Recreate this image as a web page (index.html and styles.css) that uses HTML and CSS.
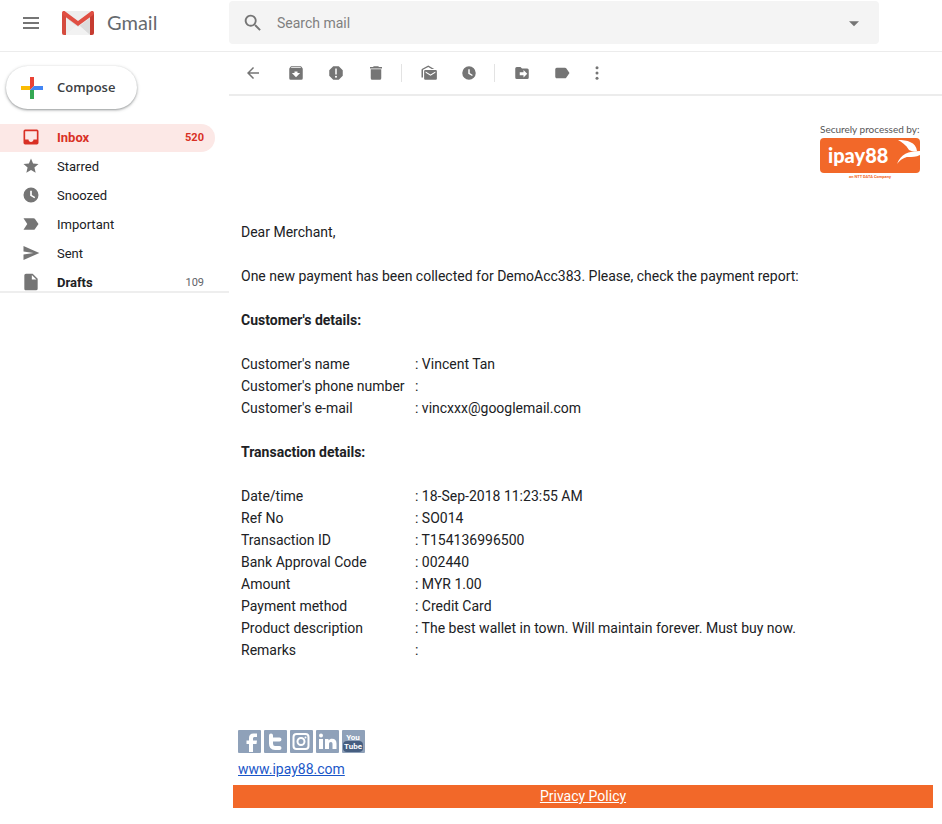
FILE: index.html
```html
<!DOCTYPE html>
<html lang="en">
<head>
<meta charset="utf-8">
<meta name="viewport" content="width=device-width, initial-scale=1">
<title>Gmail</title>
<link rel="stylesheet" href="styles.css">
</head>
<body>
<header class="header">
  <div class="brand">
    <button class="icon-button menu" type="button" aria-label="Main menu">
      <svg class="icon" viewBox="0 0 20 20"><path d="M2 4h16v2H2zM2 9h16v2H2zM2 14h16v2H2z"/></svg>
    </button>
    <svg class="gmail-logo" viewBox="0 0 32 24" aria-hidden="true">
      <rect width="32" height="24" rx="2" fill="#eeeeee"/>
      <path d="M4 24 16 14l12 10z" fill="#f7f7f7"/>
      <path d="M4 7 16 16 28 7v17L16 14z" fill="#dcdcdc"/>
      <path d="M4 24 14 15l2 2 2-2 10 9z" fill="#f2f2f2"/>
      <path d="M0 2v20a2 2 0 0 0 2 2h2V5z" fill="#d54c3f"/>
      <path d="M32 2v20a2 2 0 0 1-2 2h-2V5z" fill="#c63c31"/>
      <path d="M0 2C0 0 2-.3 3.200.5L16 10 28.800.5C30-.3 32 0 32 2c0 1-.5 1.800-1.200 2.300L16 15 1.200 4.300C.5 3.800 0 3 0 2z" fill="#e04f43"/>
    </svg>
    <span class="wordmark">Gmail</span>
  </div>
  <form class="search" role="search">
    <button class="icon-button" type="button" aria-label="Search">
      <svg class="icon search-icon" viewBox="0 0 24 24"><path d="M15.500 14h-.8l-.3-.3A6.500 6.500 0 1 0 13.700 14.400l.3.3v.8l5 5 1.500-1.500zm-6 0a4.500 4.500 0 1 1 0-9 4.500 4.500 0 0 1 0 9z"/></svg>
    </button>
    <input class="search-field" type="text" placeholder="Search mail" aria-label="Search mail">
    <button class="icon-button" type="button" aria-label="Search options">
      <svg class="icon" viewBox="0 0 24 24"><path d="M6 10l6 6 6-6z"/></svg>
    </button>
  </form>
</header>
<div class="layout">
  <aside class="sidebar">
    <button class="compose" type="button">
      <svg class="plus" viewBox="0 0 22 22" aria-hidden="true"><path fill="#ea4335" d="M9 0h4v9l-4 4z"/><path fill="#fbbc04" d="M0 9h9v4H0z"/><path fill="#34a853" d="M9 13h4v9H9z"/><path fill="#4285f4" d="M13 9h9v4H9z"/></svg>
      <span class="compose-label">Compose</span>
    </button>
    <nav class="folders" aria-label="Folders">
      <a class="folder active" href="#inbox">
        <svg class="icon" viewBox="0 0 24 24"><path d="M19 3H5a2 2 0 0 0-2 2v14a2 2 0 0 0 2 2h14a2 2 0 0 0 2-2V5a2 2 0 0 0-2-2zm0 12h-4c0 1.700-1.300 3-3 3s-3-1.300-3-3H5V5h14z"/></svg>
        <span class="name">Inbox</span><span class="count">520</span>
      </a>
      <a class="folder" href="#starred">
        <svg class="icon" viewBox="0 0 24 24"><path d="M12 16.800 17.600 20.200l-1.500-6.400L21 9.500l-6.500-.6L12 3 9.500 8.900 3 9.500l4.900 4.300-1.500 6.400z"/></svg>
        <span class="name">Starred</span>
      </a>
      <a class="folder" href="#snoozed">
        <svg class="icon" viewBox="0 0 24 24"><path fill-rule="evenodd" d="M12 3a9 9 0 1 0 0 18 9 9 0 0 0 0-18zM11 7h2v5l4 2.500-.9 1.500L11 13z"/></svg>
        <span class="name">Snoozed</span>
      </a>
      <a class="folder" href="#important">
        <svg class="icon" viewBox="0 0 24 24"><path d="M3 19h12c.7 0 1.300-.3 1.600-.8L21 12l-4.400-6.200C16.300 5.300 15.700 5 15 5H3l4.500 7z"/></svg>
        <span class="name">Important</span>
      </a>
      <a class="folder" href="#sent">
        <svg class="icon" viewBox="0 0 24 24"><path d="M3 20.500 22 12 3 3.500v6.600L15 12 3 13.900z"/></svg>
        <span class="name">Sent</span>
      </a>
      <a class="folder unread" href="#drafts">
        <svg class="icon" viewBox="0 0 24 24"><path d="M6 2a2 2 0 0 0-2 2v16c0 1.100.9 2 2 2h12a2 2 0 0 0 2-2V8l-6-6zm7 7V3.500L18.500 9z"/></svg>
        <span class="name">Drafts</span><span class="count">109</span>
      </a>
    </nav>
  </aside>
  <main class="main">
    <div class="toolbar" role="toolbar" aria-label="Message actions">
      <button class="tool back" type="button" aria-label="Back"><svg class="icon" viewBox="0 0 24 24"><path d="M20 11H7.800l5.600-5.600L12 4l-8 8 8 8 1.400-1.400L7.800 13H20z"/></svg></button>
      <button class="tool" type="button" aria-label="Archive"><svg class="icon" viewBox="0 0 24 24"><path fill-rule="evenodd" d="M20.500 5.200 19.200 3.500C18.900 3.200 18.500 3 18 3H6c-.5 0-.9.200-1.200.5L3.500 5.200C3.200 5.600 3 6 3 6.500V19a2 2 0 0 0 2 2h14a2 2 0 0 0 2-2V6.500c0-.5-.2-.9-.5-1.300zM12 17.500 6.500 12H10v-2h4v2h3.500zM5.100 5l.8-1h12l.9 1z"/></svg></button>
      <button class="tool" type="button" aria-label="Report spam"><svg class="icon" viewBox="0 0 24 24"><path fill-rule="evenodd" d="M15.700 3H8.300L3 8.300v7.400L8.300 21h7.400l5.300-5.300V8.300zM11 6h2v8h-2zM12 15.600a1.400 1.400 0 1 1 0 2.800 1.400 1.400 0 0 1 0-2.800z"/></svg></button>
      <button class="tool" type="button" aria-label="Delete"><svg class="icon" viewBox="0 0 24 24"><path d="M5 19a2 2 0 0 0 2 2h10a2 2 0 0 0 2-2V7H5zM20 4h-4l-1-1H9L8 4H4v2h16z"/></svg></button>
      <span class="divider"></span>
      <button class="tool" type="button" aria-label="Mark as unread"><svg class="icon" viewBox="0 0 24 24"><path fill-rule="evenodd" d="M7 8h14a1.500 1.500 0 0 1 1.500 1.500v10A1.500 1.500 0 0 1 21 21H7a1.500 1.500 0 0 1-1.500-1.500v-10A1.500 1.500 0 0 1 7 8zm.5 2v1.800l6.500 4 6.500-4V10L14 14z"/><path d="M2 18V8c0-.8.3-1.300 1-1.700L11 2l8 4.500h-3.500L11 4 4 7.700V18z"/></svg></button>
      <button class="tool" type="button" aria-label="Snooze"><svg class="icon" viewBox="0 0 24 24"><path fill-rule="evenodd" d="M12 3a9 9 0 1 0 0 18 9 9 0 0 0 0-18zM11 7h2v5l4 2.500-.9 1.500L11 13z"/></svg></button>
      <span class="divider"></span>
      <button class="tool" type="button" aria-label="Move to"><svg class="icon" viewBox="0 0 24 24"><path fill-rule="evenodd" d="M19 6h-7l-2-2H5a2 2 0 0 0-2 2v12a2 2 0 0 0 2 2h14a2 2 0 0 0 2-2V8a2 2 0 0 0-2-2zm-5 12v-3H9v-4h5V8l5 5z"/></svg></button>
      <button class="tool" type="button" aria-label="Labels"><svg class="icon" viewBox="0 0 24 24"><path d="M17.600 5.800C17.300 5.300 16.700 5 16 5H5a2 2 0 0 0-2 2v10c0 1.100.9 2 2 2h11c.7 0 1.300-.3 1.600-.8L22 12z"/></svg></button>
      <button class="tool more" type="button" aria-label="More"><svg class="icon" viewBox="0 0 24 24"><circle cx="12" cy="5" r="2"/><circle cx="12" cy="12" r="2"/><circle cx="12" cy="19" r="2"/></svg></button>
    </div>
    <article class="mail">
      <div class="processor">
        <span class="processor-caption">Securely processed by:</span>
        <svg class="ipay" viewBox="0 0 100 44" role="img" aria-label="ipay88, an NTT DATA Company">
          <rect y="1" width="100" height="35" rx="4" fill="#f26829"/>
          <text class="ipay-name" x="8" y="26">ipay88</text>
          <path d="M78 3c9 0 18 2 19 11-3 1-6 0-8-1C86 8 82 5 78 3z" fill="#fff"/>
          <path d="M100 14c-12 0-19 3-23 13 4-5 8-7 11-7 4 0 8 0 12-2z" fill="#fff"/>
          <text class="ipay-owner" x="50" y="41">an NTT DATA Company</text>
        </svg>
      </div>
      <div class="letter">
        <p>Dear Merchant,</p>
        <p>One new payment has been collected for DemoAcc383. Please, check the payment report:</p>
        <h2>Customer's details:</h2>
        <table>
          <tr><th scope="row">Customer's name</th><td>: Vincent Tan</td></tr>
          <tr><th scope="row">Customer's phone number</th><td>:</td></tr>
          <tr><th scope="row">Customer's e-mail</th><td>: vincxxx@googlemail.com</td></tr>
        </table>
        <h2>Transaction details:</h2>
        <table>
          <tr><th scope="row">Date/time</th><td>: 18-Sep-2018 11:23:55 AM</td></tr>
          <tr><th scope="row">Ref No</th><td>: SO014</td></tr>
          <tr><th scope="row">Transaction ID</th><td>: T154136996500</td></tr>
          <tr><th scope="row">Bank Approval Code</th><td>: 002440</td></tr>
          <tr><th scope="row">Amount</th><td>: MYR 1.00</td></tr>
          <tr><th scope="row">Payment method</th><td>: Credit Card</td></tr>
          <tr><th scope="row">Product description</th><td>: The best wallet in town. Will maintain forever. Must buy now.</td></tr>
          <tr><th scope="row">Remarks</th><td>:</td></tr>
        </table>
      </div>
      <footer>
        <div class="social">
          <a href="#facebook" aria-label="Facebook"><svg viewBox="0 0 23 23"><rect width="23" height="23" rx="1" fill="#8fa1b9"/><path fill="#fff" d="M11 22v-8H8.500v-3.500H11V8c0-3 1.500-4.500 4.500-4.500H19V7h-2.200c-1.300 0-1.800.5-1.800 1.600v1.900h4l-.5 3.500H15v8z"/></svg></a>
          <a href="#twitter" aria-label="Twitter"><svg viewBox="0 0 23 23"><rect width="23" height="23" rx="1" fill="#8fa1b9"/><path d="M7 5.500v8c0 3 1.500 4.500 4 4.500h4.500M7 9.500h8.500" fill="none" stroke="#fff" stroke-width="4" stroke-linecap="round"/></svg></a>
          <a href="#instagram" aria-label="Instagram"><svg viewBox="0 0 23 23"><rect width="23" height="23" rx="1" fill="#8fa1b9"/><g fill="none" stroke="#fff" stroke-width="2"><rect x="3.500" y="4" width="15" height="15" rx="3"/><circle cx="11" cy="11.500" r="3.500"/></g><circle cx="15.500" cy="7.500" r="1" fill="#fff"/></svg></a>
          <a href="#linkedin" aria-label="LinkedIn"><svg viewBox="0 0 23 23"><rect width="23" height="23" rx="1" fill="#8fa1b9"/><circle cx="5" cy="5.500" r="2" fill="#fff"/><path fill="#fff" d="M3 9h4v10H3zM9 9h3.500v1.500C13.500 9.300 14.500 8.700 16 8.700c3 0 4.500 1.800 4.500 5V19h-4v-5c0-1.300-.5-2-1.600-2-1.200 0-1.900.8-1.900 2.200V19H9z"/></svg></a>
          <a href="#youtube" aria-label="YouTube"><svg viewBox="0 0 23 23"><rect width="23" height="23" rx="1" fill="#8fa1b9"/><rect x="1" y="11" width="20" height="11" rx="4" fill="#465e80"/><text class="tube" x="11" y="10">You</text><text class="tube" x="11" y="19">Tube</text></svg></a>
        </div>
        <a class="site" href="#site">www.ipay88.com</a>
        <div class="policy"><a href="#privacy">Privacy Policy</a></div>
      </footer>
    </article>
  </main>
</div>
</body>
</html>
```

FILE: styles.css
```css
* {
  box-sizing: border-box;
}

body {
  margin: 0;
  background: #fff;
  color: #202124;
  font-family: Roboto, "Liberation Sans", sans-serif;
  font-size: 14px;
}

button,
input {
  border: 0;
  padding: 0;
  background: none;
  color: inherit;
  font: inherit;
}

.icon {
  display: block;
  width: 20px;
  height: 20px;
  flex: none;
  fill: #757575;
}

.header {
  display: flex;
  align-items: flex-start;
  height: 52px;
  padding: 1px 63px 0 0;
  border-bottom: 1px solid #ececec;
}

.brand {
  display: flex;
  align-items: center;
  width: 229px;
  height: 44px;
  padding-left: 21px;
  flex: none;
}

.gmail-logo {
  width: 32px;
  height: 24px;
  margin: 0 13px 0 21px;
}

.wordmark {
  padding-bottom: 2px;
  color: #666a6e;
  font-family: Lato, sans-serif;
  font-size: 20px;
}

.search {
  display: flex;
  align-items: center;
  flex: 1;
  height: 43px;
  padding: 0 15px 0 13px;
  border-radius: 4px;
  background: #f4f4f4;
}

.search-icon {
  width: 22px;
  height: 22px;
}

.search-field {
  flex: 1;
  min-width: 0;
  margin-left: 13px;
  outline: 0;
}

.search-field::placeholder {
  color: #808080;
  opacity: 1;
}

.layout {
  display: flex;
  align-items: flex-start;
}

.sidebar {
  width: 229px;
  flex: none;
  padding-top: 14px;
  border-bottom: 2px solid #eee;
}

.compose {
  display: flex;
  align-items: center;
  gap: 14px;
  height: 43px;
  margin: 0 0 15px 6px;
  padding: 0 22px 0 15px;
  border-radius: 22px;
  box-shadow: 0 1px 2px rgba(60, 64, 67, .4), 0 1px 3px 1px rgba(60, 64, 67, .15);
  color: #3c4043;
  font-family: "Open Sans", sans-serif;
  font-size: 13px;
  font-weight: 600;
}

.compose-label {
  padding-bottom: 2px;
}

.plus {
  width: 22px;
  height: 22px;
}

.folders {
  display: grid;
  gap: 1px;
  height: 167px;
  overflow: hidden;
}

.folder {
  display: flex;
  align-items: center;
  height: 28px;
  margin-right: 14px;
  padding: 0 11px 2px 21px;
  border-radius: 0 14px 14px 0;
  color: #202124;
  font-size: 13px;
  text-decoration: none;
}

.name {
  flex: 1;
  margin-left: 16px;
}

.count {
  font-size: 11px;
  font-weight: 400;
  color: #5f6368;
}

.active {
  background: #fce8e6;
}

.active,
.active .count {
  color: #d93025;
  font-weight: 700;
}

.active .icon {
  fill: #d93025;
}

.unread {
  font-weight: 700;
}

.main {
  flex: 1;
  min-width: 0;
}

.toolbar {
  display: flex;
  align-items: center;
  height: 44px;
  padding-left: 4px;
  border-bottom: 2px solid #ececec;
}

.tool {
  display: flex;
  justify-content: center;
  width: 40px;
}

.back {
  margin-right: 3px;
}

.tool .icon {
  width: 18px;
  height: 18px;
}

.more {
  width: 30px;
}

.divider {
  width: 1px;
  height: 18px;
  margin: 0 7px 0 5px;
  background: #e3e3e3;
}

.mail {
  padding: 26px 9px 16px 4px;
}

.processor {
  display: flex;
  flex-direction: column;
  width: 100px;
  margin: 0 13px 0 auto;
}

.processor-caption {
  color: #555;
  font-family: Lato, sans-serif;
  font-size: 10px;
  line-height: 15px;
  white-space: nowrap;
}

.ipay {
  width: 100px;
  height: 44px;
}

.ipay-name {
  fill: #fff;
  font-family: Lato, sans-serif;
  font-size: 20px;
  font-weight: 900;
}

.ipay-owner {
  fill: #f26829;
  font-size: 4px;
  font-weight: 700;
  text-anchor: middle;
}

.letter {
  padding: 40px 0 0 8px;
  line-height: 22px;
}

.letter p,
.letter h2 {
  margin: 0 0 22px;
  font-size: inherit;
}

table {
  margin-bottom: 22px;
  border-collapse: collapse;
}

th,
td {
  padding: 0;
  text-align: left;
  vertical-align: top;
  font-weight: 400;
}

th {
  width: 174px;
}

footer {
  padding-top: 47px;
}

.social {
  display: flex;
  gap: 3px;
  padding-left: 5px;
}

.social svg {
  display: block;
  width: 23px;
  height: 23px;
}

.tube {
  fill: #fff;
  font-size: 8px;
  font-weight: 700;
  text-anchor: middle;
}

.site {
  display: block;
  width: max-content;
  margin: 5px 0 5px 5px;
  color: #1a56c8;
  line-height: 22px;
}

.policy {
  background: #f26829;
  color: #fff;
  line-height: 23px;
  text-align: center;
}

.policy a {
  color: inherit;
}
```
